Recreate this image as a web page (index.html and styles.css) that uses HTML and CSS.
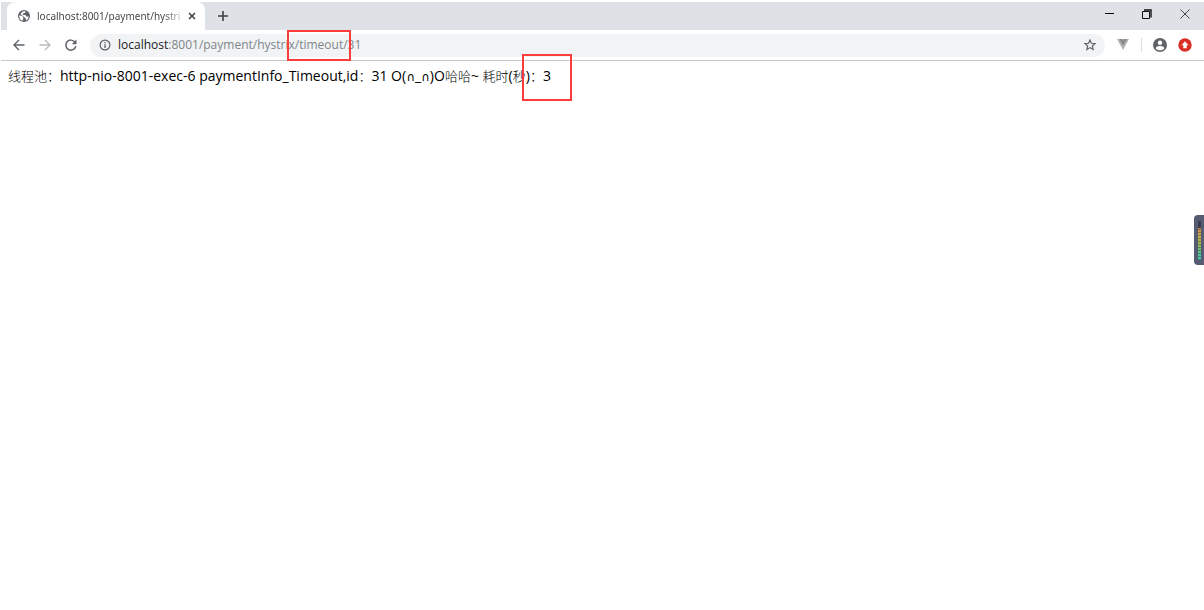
FILE: index.html
```html
<!DOCTYPE html>
<html lang="zh">
<head>
<meta charset="UTF-8">
<meta name="viewport" content="width=device-width, initial-scale=1.0">
<title>localhost:8001/payment/hystrix/timeout/31</title>
<link rel="stylesheet" href="styles.css">
</head>
<body>

<div class="browser">
  <header class="tab-strip">
    <div class="tab">
      <svg class="globe" width="12" height="12" viewBox="0 0 12 12">
        <circle cx="6" cy="6" r="6" fill="#5f6368"/>
        <path d="M1.2 5.2 4.6 6.2 5.4 8 4.6 10.8C2.4 10.2 1 8.4 1.2 5.2Z" fill="#fff"/>
        <path d="M5 1.3 7.6 1.2 6.9 3 5 3.5 4.7 4.9 7.5 5 8.4 6.5 10.7 6.4C10.6 8.4 9.6 9.7 8.2 10.4L7.6 8.3 6.3 7.2 4.8 5.8 3 4.9 2.9 3.6Z" fill="#fff"/>
      </svg>
      <span class="tab-title">localhost:8001/payment/hystri</span>
      <button class="tab-close" aria-label="Close tab">
        <svg width="8" height="8" viewBox="0 0 8 8"><path d="M1 1 7 7M7 1 1 7" stroke="#3c4043" stroke-width="1.5"/></svg>
      </button>
    </div>
    <button class="new-tab" aria-label="New tab">
      <svg width="10" height="10" viewBox="0 0 10 10"><path d="M5 0V10M0 5H10" stroke="#3c4043" stroke-width="1.6"/></svg>
    </button>
    <div class="window-controls">
      <button aria-label="Minimize">
        <svg width="10" height="10" viewBox="0 0 10 10"><path d="M1 4.5H10" stroke="#000"/></svg>
      </button>
      <button aria-label="Restore">
        <svg width="10" height="10" viewBox="0 0 10 10" fill="none" stroke="#111"><path d="M.5 2.5H7.5V9.5H.5Z"/><path d="M2 1H9V8.5" stroke-width="1.4"/></svg>
      </button>
      <button aria-label="Close">
        <svg width="10" height="10" viewBox="0 0 10 10"><path d="M.5.5 9.5 9.5M9.5.5.5 9.5" stroke="#333" stroke-width=".9"/></svg>
      </button>
    </div>
  </header>

  <nav class="toolbar">
    <button class="nav-button" aria-label="Back">
      <svg width="12" height="12" viewBox="0 0 12 12" fill="none" stroke="#5f6368" stroke-width="1.4"><path d="M11.5 6H1.2M6 1 1 6 6 11"/></svg>
    </button>
    <button class="nav-button" aria-label="Forward" disabled>
      <svg width="12" height="12" viewBox="0 0 12 12" fill="none" stroke="#babcbe" stroke-width="1.4"><path d="M.5 6H10.8M6 1 11 6 6 11"/></svg>
    </button>
    <button class="nav-button" aria-label="Reload">
      <svg width="12" height="12" viewBox="0 0 12 12"><path d="M10 3.2A5 5 0 1 0 10.8 7.3" fill="none" stroke="#5f6368" stroke-width="1.5"/><path d="M11.5.5V5.2H6.8Z" fill="#5f6368"/></svg>
    </button>
    <div class="address-bar">
      <svg width="12" height="12" viewBox="0 0 12 12"><circle cx="6" cy="6" r="4.9" fill="none" stroke="#5f6368" stroke-width="1.2"/><path d="M6 5.2V9M6 3V4.2" stroke="#5f6368" stroke-width="1.3"/></svg>
      <a class="url" href="#"><span class="host">localhost</span>:8001/payment/hystrix/timeout/31</a>
      <button class="bookmark" aria-label="Bookmark this page">
        <svg width="12" height="12" viewBox="0 0 12 12"><path d="M6 1 7.4 4.3 11 4.6 8.3 7 9.1 10.5 6 8.6 2.9 10.5 3.7 7 1 4.6 4.6 4.3Z" fill="none" stroke="#5f6368" stroke-width="1.2"/></svg>
      </button>
    </div>
    <div class="extensions">
      <button aria-label="Vue devtools">
        <svg width="14" height="12" viewBox="0 0 14 12"><path d="M1 0H13L7 11Z" fill="#b0b0b0"/><path d="M3.4 0H5.7L7 2.3 8.3 0H10.6L7 6.6Z" fill="#858585"/></svg>
      </button>
      <span class="divider"></span>
      <button aria-label="Profile">
        <svg width="14" height="14" viewBox="0 0 14 14"><circle cx="7" cy="7" r="7" fill="#5f6368"/><circle cx="7" cy="4.7" r="2.2" fill="#fff"/><path d="M2.6 10.2C3.4 8.6 5.3 8.1 7 8.1S10.6 8.6 11.4 10.2C10.4 11.6 8.9 12.3 7 12.3S3.6 11.6 2.6 10.2Z" fill="#fff"/></svg>
      </button>
      <button aria-label="Update browser">
        <svg width="14" height="14" viewBox="0 0 14 14"><circle cx="7" cy="7" r="6.7" fill="#d93025"/><path d="M7 3.3 10.5 7.2H8.7V10.2H5.3V7.2H3.5Z" fill="#fff"/></svg>
      </button>
    </div>
  </nav>

  <main class="page"><span class="zh">线程池：</span>http-nio-8001-exec-6 paymentInfo_Timeout,id<span class="zh">：</span>31 O(<span class="face">∩</span>_<span class="face">∩</span>)O<span class="zh">哈哈</span>~ <span class="zh">耗时</span>(<span class="zh">秒</span>)<span class="zh">：</span>3</main>
</div>

<div class="mark mark-url"></div>
<div class="mark mark-time"></div>

<div class="meter">
  <div class="meter-bar"></div>
</div>

</body>
</html>
```
FILE: styles.css
```css
body {
  margin: 0;
  background-color: #fff;
  font-family: "Open Sans", "Noto Sans CJK SC", sans-serif;
}

button {
  display: flex;
  align-items: center;
  justify-content: center;
  padding: 0;
  border: none;
  background: none;
}

svg {
  display: block;
  flex-shrink: 0;
}

.browser {
  padding: 2px 0 0 1px;
}

.tab-strip {
  display: flex;
  height: 28px;
  padding-left: 6px;
  background-color: #dee1e6;
}

.tab {
  display: flex;
  align-items: center;
  box-sizing: border-box;
  width: 198px;
  padding: 0 7px 0 11px;
  border-radius: 8px 8px 0 0;
  background-color: #fff;
}

.tab-title {
  flex: 1;
  margin-left: 7px;
  white-space: nowrap;
  font-family: "Noto Sans", sans-serif;
  font-size: 10px;
  color: #45494d;
  mask-image: linear-gradient(to right, #000 85%, transparent);
}

.tab-close {
  width: 12px;
  height: 12px;
}

.new-tab {
  width: 36px;
}

.window-controls {
  display: flex;
  margin-left: auto;
}

.window-controls button {
  width: 38px;
  height: 24px;
}

.toolbar {
  display: flex;
  align-items: center;
  height: 30px;
  padding: 0 12px 0 5px;
  border-bottom: 1px solid #c8c8c8;
}

.nav-button {
  width: 26px;
  height: 26px;
}

.address-bar {
  display: flex;
  flex: 1;
  align-items: center;
  height: 23px;
  margin-left: 6px;
  padding: 0 9px;
  border-radius: 12px;
  background-color: #f1f3f4;
}

.url {
  flex: 1;
  margin-left: 7px;
  font-size: 12px;
  line-height: 22px;
  color: #80868b;
  text-decoration: none;
}

.host {
  color: #202124;
}

.extensions {
  display: flex;
  align-items: center;
  gap: 11px;
  margin-left: 11px;
}

.divider {
  width: 1px;
  height: 14px;
  background-color: #dadce0;
}

.page {
  padding: 5px 7px;
  font-size: 14px;
  line-height: 20px;
  color: #000;
}

.zh {
  font-size: 13px;
  font-weight: 300;
}

.face {
  font-family: "DejaVu Sans", sans-serif;
  font-size: 12px;
}

/* red highlight boxes */
.mark {
  position: absolute;
  box-sizing: border-box;
  border: 2px solid #fa3c3c;
}

.mark-url {
  top: 30px;
  left: 287px;
  width: 64px;
  height: 31px;
}

.mark-time {
  top: 54px;
  left: 522px;
  width: 50px;
  height: 47px;
}

/* level meter docked to the right edge */
.meter {
  position: absolute;
  top: 215px;
  right: 0;
  box-sizing: border-box;
  width: 10px;
  height: 50px;
  padding: 6px 3px 5px 4px;
  border-radius: 4px 0 0 4px;
  background-color: #555b70;
}

.meter-bar {
  height: 100%;
  background:
    repeating-linear-gradient(transparent 0 2px, rgba(60, 65, 80, 0.5) 2px 3px),
    linear-gradient(#373b4b 0 18%, #c98452 18%, #c9ad45 38%, #9dba50 60%, #4fc596 82%, #4cc5a4);
}
```
